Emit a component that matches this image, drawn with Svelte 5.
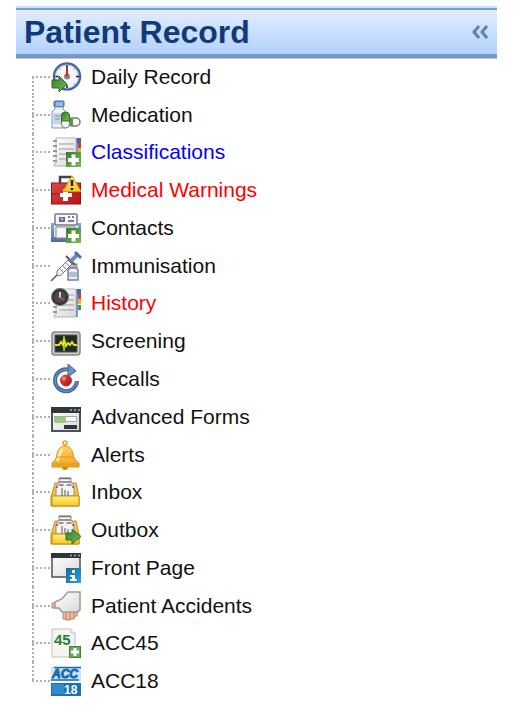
<script>
  const items = [
    { id: 'daily-record', label: 'Daily Record' },
    { id: 'medication', label: 'Medication' },
    { id: 'classifications', label: 'Classifications', tone: 'blue' },
    { id: 'medical-warnings', label: 'Medical Warnings', tone: 'red' },
    { id: 'contacts', label: 'Contacts' },
    { id: 'immunisation', label: 'Immunisation' },
    { id: 'history', label: 'History', tone: 'red' },
    { id: 'screening', label: 'Screening' },
    { id: 'recalls', label: 'Recalls' },
    { id: 'advanced-forms', label: 'Advanced Forms' },
    { id: 'alerts', label: 'Alerts' },
    { id: 'inbox', label: 'Inbox' },
    { id: 'outbox', label: 'Outbox' },
    { id: 'front-page', label: 'Front Page' },
    { id: 'patient-accidents', label: 'Patient Accidents' },
    { id: 'acc45', label: 'ACC45' },
    { id: 'acc18', label: 'ACC18' },
  ];

  let collapsed = $state(false);
</script>

{#snippet plusBadge()}
  <rect x="15" y="15" width="15" height="15" fill="url(#green)" />
  <path d="M20.500 17.500h4v3.500h3.500v4h-3.500v3.500h-4v-3.500h-3.500v-4h3.500z" fill="#fff" />
{/snippet}

{#snippet notebook()}
  <path d="M5 1h20v28H3v-2l2-1z" fill="url(#paper)" stroke="#b4b4b4" />
  <path d="M2 4h4M2 9h4M2 14h4M2 19h4M2 24h4" stroke="#999" stroke-width="2" />
  <path d="M8 7h15M8 12h15M8 17h15M8 22h15" stroke="#999" />
  <rect x="25" y="1" width="2" height="28" fill="#7f9bcb" />
  <rect x="26" y="1" width="4" height="5" fill="#3f66ae" />
  <rect x="27" y="6" width="3" height="5" fill="#d33a31" />
  <rect x="27" y="11" width="3" height="5" fill="#eab02f" />
  <rect x="27" y="17" width="3" height="5" fill="#3b9a3b" />
{/snippet}

{#snippet tray()}
  <path d="M4 6h21l3 14v9H0v-9z" fill="url(#gold)" stroke="#c98a10" />
  <path d="M5 19V9l3-4V1h12v4l3 4v10z" fill="#f5f5f5" stroke="#8d8d8d" />
  <path d="M8 1.500h12M8 5h12" stroke="#777" stroke-width="1.500" />
  <path d="M7 8h14" stroke="#4c78b8" stroke-dasharray="2 2" />
  <path d="M6 9v2M22 9v2M9 8h2M17 8h2" stroke="#d0342c" stroke-width="1.500" />
  <path d="M11 11v8M14 13v6M17 14v5" stroke="#555" />
  <path d="M1 19h27v10H1z" fill="url(#yellow)" stroke="#c78b0c" />
{/snippet}

{#snippet frame()}
  <rect x="1" y="1" width="28" height="23" fill="url(#paper)" stroke="#4d5256" stroke-width="1.500" />
  <rect x="0" y="0" width="30" height="5" fill="#30363a" />
  <path d="M19 2.500h2M23 2.500h2M27 2.500h2" stroke="#a8adb0" stroke-width="1.500" />
{/snippet}

{#snippet icon(id)}
  <svg class="icon" viewBox="0 0 30 30" aria-hidden="true">
    {#if id === 'daily-record'}
      <circle cx="16" cy="14.500" r="13" fill="#f4f7fb" stroke="#4767a3" stroke-width="2.500" />
      <circle cx="16" cy="14.500" r="11.500" fill="none" stroke="#b8cbe8" />
      <path d="M16 3v3M16 23v3M25 14.500h3M4.500 14.500h3" stroke="#222" stroke-width="1.500" />
      <path d="M24 6l-1 1.500M8 6l1 1.500M24 23l-1-1.500" stroke="#888" />
      <circle cx="16" cy="14.500" r="3" fill="#888" />
      <path d="M16 14.500V6" stroke="#e02020" stroke-width="2" />
      <path d="M1 18h7v-4l8 8-8 8v-4H1z" fill="url(#green)" stroke="#2f6d24" />
    {:else if id === 'medication'}
      <rect x="3" y="1" width="10" height="6" rx="1" fill="#6f96cf" stroke="#40649f" />
      <path d="M5 3h7M5 5h7" stroke="#c8d9f0" />
      <path d="M4 7h8v2l3 3v16H1V12l3-3z" fill="#edf2f8" stroke="#8297b4" />
      <path d="M2 13h9v11H2z" fill="#c9d5e5" />
      <path d="M4 16h6M4 19h5" stroke="#8292a8" />
      <rect x="17" y="18" width="12" height="8" rx="4" fill="#fafafa" stroke="#777" stroke-width="1.500" />
      <path d="M18 18.500h4v7h-4z" fill="#4f9e3c" />
      <rect x="10.500" y="12" width="8" height="16" rx="4" fill="#fafafa" stroke="#777" />
      <path d="M10.500 21v-5a4 4 0 0 1 8 0v5z" fill="url(#green)" stroke="#2f7426" />
    {:else if id === 'classifications'}
      {@render notebook()}
      {@render plusBadge()}
    {:else if id === 'medical-warnings'}
      <path d="M9 8V2h11v6" fill="none" stroke="#444" stroke-width="2.500" />
      <rect x="0.500" y="8" width="29" height="21" fill="url(#red)" stroke="#8e1518" />
      <path d="M1 19h28" stroke="#a0191c" />
      <path d="M12 14h5v4h4v4h-4v4h-5v-4H9v-4h3z" fill="#fff" />
      <path d="M21 1l9 15.500H12z" fill="url(#yellow)" stroke="#d99a10" stroke-linejoin="round" />
      <path d="M21 5v6M21 13v2" stroke="#222" stroke-width="2.500" />
    {:else if id === 'contacts'}
      <path d="M0 10h30v19H0z" fill="url(#blue)" />
      <path d="M3 12h24v12H3z" fill="#dfe7f2" />
      <rect x="4" y="1" width="22" height="11" rx="1" fill="#f5f6f8" stroke="#777b82" stroke-width="1.500" />
      <rect x="8" y="4" width="6" height="5" fill="#4a6aa5" />
      <circle cx="11" cy="6" r="1.500" fill="#e0ad91" />
      <path d="M17 4h2M21 4h2M17 8h6" stroke="#555" stroke-width="1.500" />
      <path d="M5 14h19v11H5z" fill="#f8f8f8" stroke="#888" />
      {@render plusBadge()}
    {:else if id === 'immunisation'}
      <rect x="18" y="13" width="8" height="4" fill="#b8bec6" stroke="#7d858e" />
      <path d="M19 17h6l2 2v10H17V19z" fill="#edf1f5" stroke="#78828e" stroke-width="1.500" />
      <path d="M18 21h8v5h-8z" fill="#aebfd2" />
      <path d="M0 30l7-7" stroke="#555" stroke-width="1.500" />
      <path d="M6 20L17 9l4 4-11 11-4 1z" fill="#f1f2f3" stroke="#777" />
      <path d="M9 18l3 3M12 15l3 3M15 12l3 3" stroke="#888" />
      <path d="M15 5l9 9" stroke="#555" stroke-width="2" />
      <path d="M20 10l6-6" stroke="#6d8cc2" stroke-width="4" />
      <path d="M24 1l6 6" stroke="#4f72b0" stroke-width="3" />
    {:else if id === 'history'}
      {@render notebook()}
      <circle cx="9" cy="9" r="8.500" fill="#343434" stroke="#777" />
      <circle cx="9" cy="9" r="6" fill="#494949" />
      <path d="M9 4v6" stroke="#fff" stroke-width="1.500" />
      <path d="M9 9l4 3" stroke="#e04a40" stroke-width="1.500" />
    {:else if id === 'screening'}
      <rect x="1" y="6" width="28" height="23" rx="3" fill="#d0d0d0" stroke="#858585" stroke-width="1.500" />
      <rect x="4" y="9" width="22" height="17" fill="#252825" stroke="#555" />
      <path d="M13 10v15" stroke="#58d61c" stroke-width="2" />
      <path d="M4 19h4l2-3 2 3 1-6 2 7 2-3 2 2 2-3 2 3h3" fill="none" stroke="#e2e41b" stroke-width="2" />
    {:else if id === 'recalls'}
      <path d="M17 5.500A11 11 0 1 0 26 17" fill="none" stroke="#4166a5" stroke-width="4" />
      <path d="M17 5.500A11 11 0 1 0 26 17" fill="none" stroke="#7f9fce" />
      <path d="M17 0l8 7-8 6z" fill="#6d91c5" stroke="#3d609d" />
      <circle cx="15" cy="16.500" r="5.500" fill="url(#red)" stroke="#c43434" />
      <circle cx="13" cy="14.500" r="2" fill="#f08c85" />
    {:else if id === 'advanced-forms'}
      <rect x="1" y="6" width="28" height="23" fill="url(#paper)" stroke="#4d5256" stroke-width="2" />
      <rect x="0" y="5" width="30" height="6" fill="#30363a" />
      <path d="M19 8h2M23 8h2M27 8h2" stroke="#a8adb0" stroke-width="1.500" />
      <rect x="3.500" y="14.500" width="22" height="5" fill="#fff" stroke="#aaa" />
      <rect x="4" y="15" width="11" height="6" fill="#9bc879" />
      <rect x="13" y="23" width="13" height="4" fill="#30363a" />
    {:else if id === 'alerts'}
      <circle cx="14" cy="3" r="2" fill="#fff3c0" stroke="#e5a11f" stroke-width="1.500" />
      <ellipse cx="14" cy="27" rx="3" ry="3" fill="#c9850e" />
      <path d="M14 6c-4 0-7 3-8 8-1 4-1 6-5 9v4h27v-4c-4-3-5-5-6-9-1-5-4-8-8-8z" fill="url(#gold)" stroke="#d99215" />
      <path d="M11 9c-3 4-2 8-5 12" fill="none" stroke="#fff0a5" stroke-width="3" />
      <path d="M5 17h18M2 24h25" stroke="#d9951c" />
    {:else if id === 'inbox'}
      {@render tray()}
    {:else if id === 'outbox'}
      {@render tray()}
      <path d="M15 18h6v-4l9 7.500-9 7.500v-4h-6z" fill="url(#green)" stroke="#347025" />
    {:else if id === 'front-page'}
      {@render frame()}
      <rect x="15" y="15" width="15" height="15" fill="url(#cyan)" />
      <path d="M21 17h3v3h-3zM19 22h5v4h2v2h-7v-2h2v-2h-2z" fill="#fff" />
    {:else if id === 'patient-accidents'}
      <path d="M12 20v8h3v1h4v-1h4l1-3h2l1-6z" fill="#edbd99" stroke="#bd8260" />
      <path d="M15 21v8M19 21v8M23 21v6" stroke="#bd8260" />
      <path d="M1 12h6v5H1z" fill="#edbd99" stroke="#bd8260" />
      <path d="M4 11l7-3 4-5 2-2h12v18l-3 2H11l-3-4H4z" fill="url(#paper)" stroke="#9b9b9b" stroke-width="1.500" />
    {:else if id === 'acc45'}
      <path d="M1 1h19l4 4v24H1z" fill="#f4f5f3" stroke="#bdc3bb" />
      <path d="M20 1v4h4" fill="#fff" stroke="#bdc3bb" />
      <text x="3" y="17" font-size="15" fill="#287d35">45</text>
      <rect x="18.500" y="18.500" width="11" height="11" fill="#6ba85e" stroke="#418338" />
      <path d="M24 20v8M20 24h8" stroke="#fff" stroke-width="3" />
    {:else if id === 'acc18'}
      <rect x="0" y="1" width="30" height="14" fill="#cfe3f2" />
      <text class="slanted" x="1" y="12" font-size="12" fill="#176cae" stroke="#176cae">ACC</text>
      <path d="M3 1.500h27M0 14h28" stroke="#176cae" stroke-width="1.500" />
      <rect x="0" y="17" width="30" height="13" fill="#1872b8" />
      <path d="M1 18h12v10H1z" fill="#318bca" />
      <text x="13" y="28" font-size="12" fill="#fff">18</text>
    {/if}
  </svg>
{/snippet}

<div class="panel">
  <header class="panel-header">
    <h1>Patient Record</h1>
    <button
      type="button"
      aria-label="Collapse panel"
      aria-expanded={!collapsed}
      onclick={() => (collapsed = !collapsed)}
    >
      <svg width="18" height="14" viewBox="0 0 18 14" aria-hidden="true">
        <defs>
          <linearGradient id="green" x2="1" y2="1">
            <stop offset="0" stop-color="#2f7d2a" />
            <stop offset="1" stop-color="#7fbb55" />
          </linearGradient>
          <linearGradient id="paper" x2="1" y2="1">
            <stop offset="0" stop-color="#ffffff" />
            <stop offset="1" stop-color="#d9d9d9" />
          </linearGradient>
          <linearGradient id="gold" x2="0" y2="1">
            <stop offset="0" stop-color="#fdd36a" />
            <stop offset="1" stop-color="#efa51b" />
          </linearGradient>
          <linearGradient id="yellow" x2="0" y2="1">
            <stop offset="0" stop-color="#fff08a" />
            <stop offset="1" stop-color="#f4c81c" />
          </linearGradient>
          <linearGradient id="red" x2="1" y2="1">
            <stop offset="0" stop-color="#dd4a49" />
            <stop offset="1" stop-color="#b31217" />
          </linearGradient>
          <linearGradient id="blue" x2="0" y2="1">
            <stop offset="0" stop-color="#86a7d8" />
            <stop offset="1" stop-color="#4a6bab" />
          </linearGradient>
          <linearGradient id="cyan" x2="1" y2="1">
            <stop offset="0" stop-color="#15699f" />
            <stop offset="1" stop-color="#2aa0d8" />
          </linearGradient>
        </defs>
        <path d="M8 1L3 7l5 6M16 1l-5 6 5 6" fill="none" stroke="#5c83ba" stroke-width="3" />
      </svg>
    </button>
  </header>

  {#if !collapsed}
    <nav aria-label="Patient Record">
      <ul class="tree">
        {#each items as item}
          <li>
            <span class="branch"></span>
            <a href="#{item.id}" class={item.tone}>
              {@render icon(item.id)}
              <span>{item.label}</span>
            </a>
          </li>
        {/each}
      </ul>
    </nav>
  {/if}
</div>

<style>
  :global(body) {
    background: #fff;
  }

  .panel {
    display: flex;
    flex-direction: column;
    box-sizing: border-box;
    min-height: 100vh;
    padding: 6px 29px 8px 16px;
    font-family: "Liberation Sans", Arial, sans-serif;
    color: #111;
  }

  .panel-header {
    display: flex;
    align-items: center;
    justify-content: space-between;
    height: 44px;
    padding: 0 8px;
    border-top: 2px solid #6f9edb;
    border-bottom: 3px solid #6b9bd9;
    background: linear-gradient(#e2edfd, #cadffd 50%, #b3d2fb);
    box-shadow: 0 -2px #c9dffb, 0 1px #8b8d98, 0 2px #c4c6cc;
    margin: 2px 0 1px;
  }

  h1 {
    margin: 0;
    font-size: 32px;
    line-height: 36px;
    font-weight: 700;
    color: #123a78;
  }

  button {
    display: flex;
    padding: 4px 0;
    border: 0;
    background: none;
    cursor: pointer;
  }

  nav {
    display: flex;
    flex: 1;
  }

  .tree {
    display: grid;
    flex: 1;
    grid-auto-rows: 1fr;
    margin: 0;
    padding: 0 0 0 16px;
    list-style: none;
  }

  li {
    display: flex;
    align-items: stretch;
  }

  .branch {
    --dots: #b0b0b0 0 2px, transparent 2px 4px;
    width: 19px;
    background:
      repeating-linear-gradient(var(--dots)) 0 0 / 2px 100% no-repeat,
      repeating-linear-gradient(90deg, var(--dots)) 0 50% / 100% 2px no-repeat;
  }

  li:first-child .branch {
    background-size: 2px 50%, 100% 2px;
    background-position: 0 100%, 0 50%;
  }

  li:last-child .branch {
    background-size: 2px 50%, 100% 2px;
  }

  a {
    display: flex;
    align-items: center;
    gap: 10px;
    color: inherit;
    font-size: 21px;
    line-height: 24px;
    text-decoration: none;
    white-space: nowrap;
  }

  .blue {
    color: #00f;
  }

  .red {
    color: #f00;
  }

  .icon {
    flex: none;
    width: 30px;
    height: 30px;
    overflow: visible;
  }

  .icon text {
    font-weight: 700;
  }

  .icon .slanted {
    font-style: italic;
  }
</style>
